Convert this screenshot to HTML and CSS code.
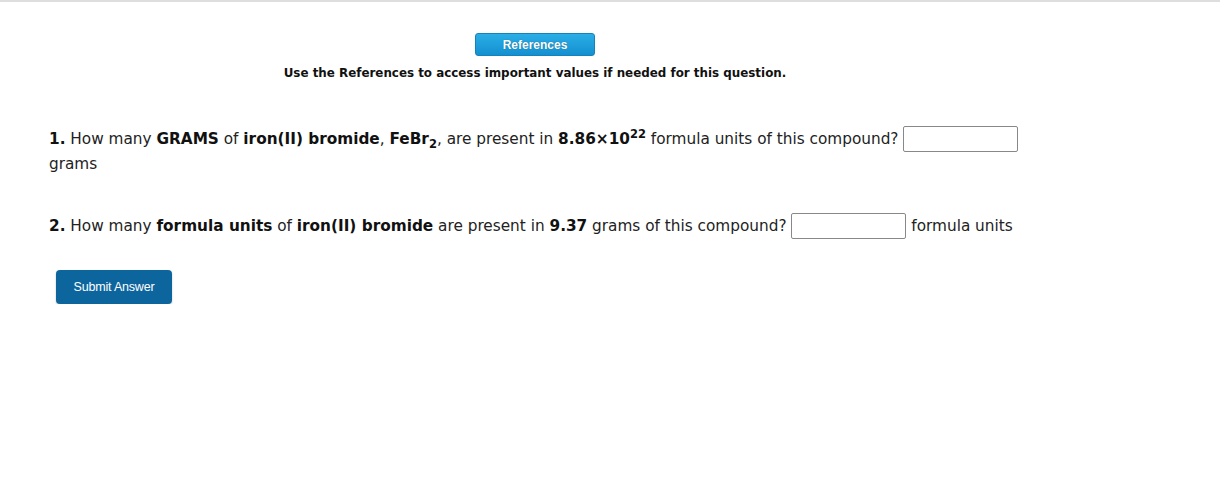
FILE: index.html
```html
<!DOCTYPE html>
<html lang="en">
<head>
  <meta charset="UTF-8">
  <title>Question</title>
  <link rel="stylesheet" href="styles.css">
</head>
<body>
  <div class="page">
    <div class="refs">
      <button class="refButton">References</button>
      <div class="refNote">Use the References to access important values if needed for this question.</div>
    </div>

    <div class="question q1">
      <b>1.</b> How many <b>GRAMS</b> of <b>iron(II) bromide</b>, <b>FeBr<sub>2</sub></b>, are present in
      <b>8.86&times;10<sup>22</sup></b> formula units of this compound? <input class="answer" type="text"><br>
      grams
    </div>

    <div class="question q2">
      <b>2.</b> How many <b>formula units</b> of <b>iron(II) bromide</b> are present in <b>9.37</b> grams of this
      compound? <input class="answer" type="text"> formula units
    </div>

    <button class="submit">Submit Answer</button>
  </div>
</body>
</html>
```

FILE: styles.css
```css
body {
  margin: 0;
  border-top: 2px solid #dedede;
  font-family: "DejaVu Sans", Verdana, sans-serif;
  color: #222;
  background: #fff;
}

.page {
  padding: 31px 0 0 49px;
  width: 972px;
}

.refs {
  text-align: center;
}

.refButton {
  display: block;
  margin: 0 auto;
  width: 120px;
  height: 23px;
  border: 1px solid #1482bd;
  border-radius: 3px;
  background: linear-gradient(#2aaee6, #1490d0);
  color: #fff;
  font-family: "Liberation Sans", Arial, sans-serif;
  font-weight: bold;
  font-size: 12px;
  padding: 0;
  text-shadow: 0 0 1px rgba(0,0,0,0.4);
}

.refNote {
  margin-top: 10px;
  font-size: 11.9px;
  font-weight: bold;
  color: #111;
}

.question {
  font-size: 15.3px;
  line-height: 25px;
}

.question b {
  color: #111;
}

.q1 {
  margin-top: 46px;
}

.q2 {
  margin-top: 36px;
}

sub, sup {
  font-size: 11.5px;
  line-height: 0;
}

.answer {
  box-sizing: border-box;
  width: 115px;
  height: 26px;
  padding: 0;
  border: 1px solid #888;
  border-radius: 2px;
  vertical-align: middle;
  margin: 0;
}

.submit {
  margin: 31px 0 0 7px;
  width: 116px;
  height: 34px;
  border: none;
  border-radius: 4px;
  background: #0d659e;
  color: #fff;
  font-family: "Liberation Sans", Arial, sans-serif;
  font-size: 12.5px;
  letter-spacing: -0.2px;
  box-shadow: 0 1px 2px rgba(0,0,0,0.25);
}
```
